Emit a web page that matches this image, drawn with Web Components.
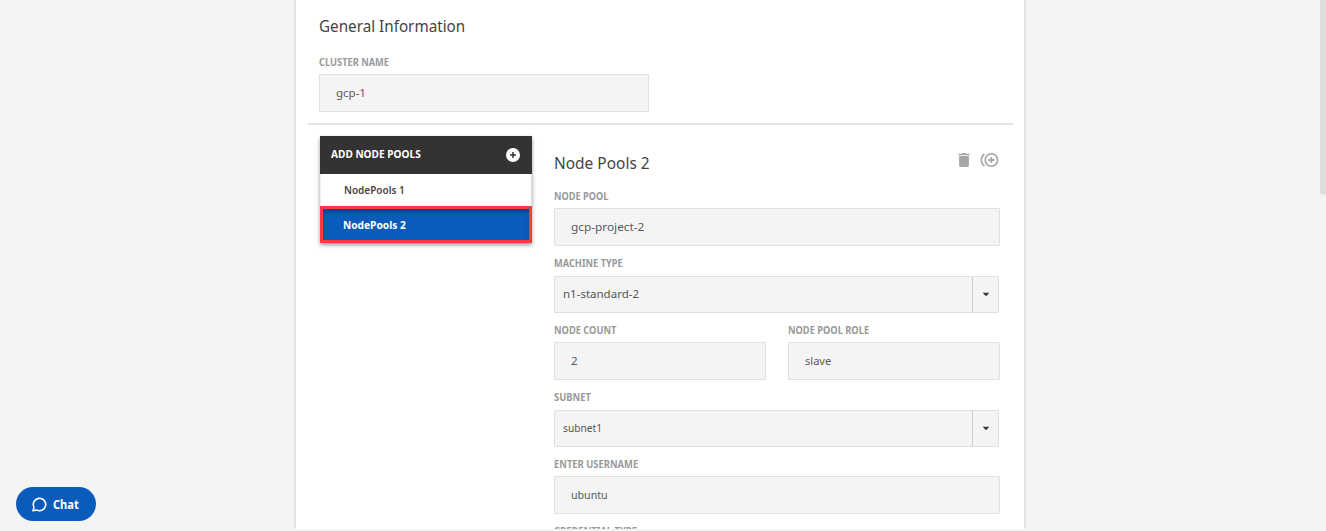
<!DOCTYPE html>
<html lang="en">
<head>
<meta charset="utf-8">
<title>Cluster node pools</title>
<style>
html,body{margin:0;height:100%;overflow:hidden;background:#f4f4f4}
body{font-family:"Noto Sans","Open Sans",sans-serif;color:#444}
</style>
</head>
<body>
<cluster-page></cluster-page>
<script>
const define = (name, html, setup) => {
  customElements.define(name, class extends HTMLElement {
    connectedCallback() {
      if (this.shadowRoot) return;
      const t = document.createElement('template');
      t.innerHTML = html;
      this.attachShadow({mode: 'open'}).append(t.content.cloneNode(true));
      if (setup) setup(this, this.shadowRoot);
    }
  });
};

/* Condensed single-line text, fitted to the width given in the "w" attribute. */
define('fit-text', `<style>
:host{display:block;white-space:nowrap}
span{display:inline-block;transform-origin:0 50%}
</style><span></span>`, (el, root) => {
  const s = root.querySelector('span');
  s.textContent = el.getAttribute('text');
  el.style.width = el.getAttribute('w') + 'px';
  s.style.transform = 'scaleX(' + (+el.getAttribute('w') / s.offsetWidth) + ')';
});

define('form-field', `<style>
:host{display:block;height:67px}
.label{font-size:10.2px;font-weight:700;line-height:14px;color:#999;padding-left:.4px}
.box{box-sizing:border-box;height:38px;margin-top:5px;border:1px solid #e0e0e0;border-radius:1px;background:#f4f4f4;display:flex;align-items:center;padding-left:16px;font-size:11.5px;line-height:16px;color:#555b60}
:host([select]) .box{height:37px;margin:6px 1px 0 0;padding-left:8px;padding-bottom:1px;color:#555}
.arrow{display:none;box-sizing:border-box;width:26px;height:35px;margin:0 0 -1px auto;border-left:1px solid #ccc;align-items:center;justify-content:center}
:host([select]) .arrow{display:flex}
svg{display:block}
</style>
<div class="label"></div>
<div class="box"><span class="v"></span><div class="arrow"><svg width="8" height="5" viewBox="0 0 8 5"><path d="M.7.8h6.6L4 4.3z" fill="#333"/></svg></div></div>`, (el, root) => {
  const fit = (text, w) => {
    const f = document.createElement('fit-text');
    f.setAttribute('text', text);
    f.setAttribute('w', w);
    return f;
  };
  root.querySelector('.label').append(fit(el.getAttribute('label'), el.getAttribute('lw')));
  if (el.hasAttribute('value')) root.querySelector('.v').append(fit(el.getAttribute('value'), el.getAttribute('vw')));
});

define('pool-list', `<style>
:host{display:block;width:212px;height:107px;box-shadow:0 2px 4px rgba(0,0,0,.4);background:#fff}
.head{height:38px;background:#333;color:#fff;display:flex;align-items:center;justify-content:space-between;padding:0 12px 0 11px;font-size:11px;font-weight:700}
.head fit-text{margin-top:-4px}
.item{height:32px;display:flex;align-items:center;padding:0 0 1px 22.5px;font-size:11.3px;font-weight:600;color:#444;border-right:1px solid #ddd;border-left:1px solid #eee;box-sizing:border-box}
.sel{height:37px;border:3px solid #fb3b40;background:#0b5cba;box-shadow:inset 0 4px 4px -1px rgba(0,0,0,.3);color:#fff;font-weight:700;padding:0 0 0 20px}
svg{display:block}
</style>
<div class="head"><fit-text text="ADD NODE POOLS" w="90"></fit-text><svg width="14" height="14" viewBox="0 0 14 14"><circle cx="7" cy="7" r="7" fill="#fff"/><path d="M7 4v6M4 7h6" stroke="#333" stroke-width="1.5"/></svg></div>
<div class="item"><fit-text text="NodePools 1" w="61"></fit-text></div>
<div class="item sel"><fit-text text="NodePools 2" w="63"></fit-text></div>`);

define('pool-form', `<style>
:host{display:block;width:446px}
header{height:53px;display:flex;justify-content:space-between}
h2{margin:15px 0 0;font-size:17px;font-weight:400;line-height:24px;color:#444}
.icons{display:flex;gap:10px;padding:16px 1px 0 0;height:16px}
.row{display:grid;grid-template-columns:212px 212px;gap:22px}
svg{display:block}
</style>
<header><h2><fit-text text="Node Pools 2" w="95.5"></fit-text></h2>
<div class="icons">
<svg width="12" height="16" viewBox="0 0 12 16" fill="#a6a6a6"><path d="M.5 1.8h3L4.3 1h3.4l.8.8h3v1.5H.5zM1.1 4h9.8v9.2a1.8 1.8 0 0 1-1.8 1.8H2.9a1.8 1.8 0 0 1-1.8-1.8z"/></svg>
<svg width="19" height="16" viewBox="0 0 19 16" fill="none" stroke="#a6a6a6" stroke-width="1.6"><circle cx="11.4" cy="8" r="6.2"/><path d="M11.4 5v6M8.4 8h6" stroke-width="1.8"/><path d="M4.4 2A7.4 7.4 0 0 0 4.4 14"/></svg>
</div></header>
<form-field label="NODE POOL" lw="54" value="gcp-project-2" vw="73"></form-field>
<form-field select label="MACHINE TYPE" lw="69" value="n1-standard-2" vw="76"></form-field>
<div class="row">
<form-field label="NODE COUNT" lw="62" value="2" vw="7"></form-field>
<form-field label="NODE POOL ROLE" lw="81" value="slave" vw="26"></form-field>
</div>
<form-field select label="SUBNET" lw="37" value="subnet1" vw="39"></form-field>
<form-field label="ENTER USERNAME" lw="84" value="ubuntu" vw="37"></form-field>
<form-field label="CREDENTIAL TYPE" lw="83"></form-field>`);

define('chat-button', `<style>
:host{position:fixed;left:16px;bottom:10px;box-sizing:border-box;width:80px;height:34px;border-radius:17px;background:#0b5cba;color:#fff;display:flex;align-items:center;gap:6px;padding-left:16px;font-size:11.5px;font-weight:700}
svg{display:block}
</style>
<svg width="15" height="15" viewBox="0 0 15 15" fill="none" stroke="#fff" stroke-width="1.6" stroke-linejoin="round"><path d="M1 13.8l1-3.5A6.2 6.2 0 1 1 4.7 13z"/></svg><fit-text text="Chat" w="26"></fit-text>`);

define('cluster-page', `<style>
:host{display:block;height:531px}
main{box-sizing:border-box;width:728px;height:529px;margin-left:296px;padding:0 11px 0 12px;background:#fff;box-shadow:0 0 3px rgba(0,0,0,.25);clip-path:inset(0 -5px 0 -5px)}
.general{height:123px;box-sizing:border-box;padding:14px 0 0 11px}
h1{margin:0 0 18px;font-size:17px;font-weight:400;line-height:24px;color:#444}
.general form-field{width:330px;margin-top:-1px}
.rule{height:2px;background:#e4e4e4}
.body{display:flex;gap:22px;padding:11px 0 0 12px}
.scroll{position:fixed;right:0;top:0;width:6px;height:195px;background:#dedede;border-radius:0 0 3px 3px}
</style>
<main>
<section class="general"><h1><fit-text text="General Information" w="146"></fit-text></h1>
<form-field label="CLUSTER NAME" lw="70" value="gcp-1" vw="30"></form-field></section>
<div class="rule"></div>
<section class="body"><pool-list></pool-list><pool-form></pool-form></section>
</main>
<div class="scroll"></div>
<chat-button></chat-button>`);
</script>
</body>
</html>
